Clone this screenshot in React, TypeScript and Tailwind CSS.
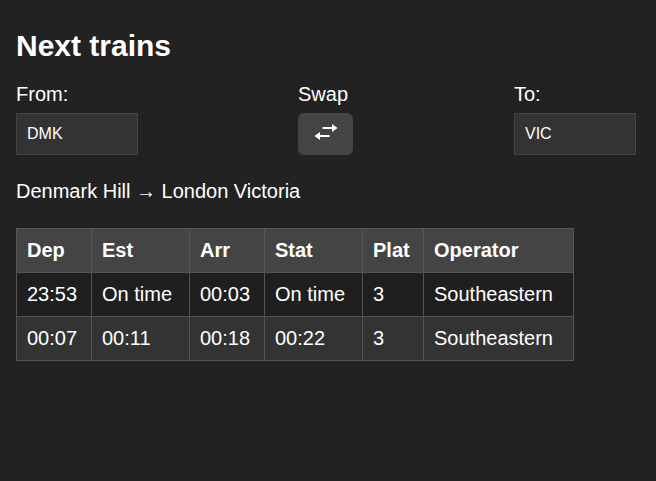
const rows = [
  { dep: "23:53", est: "On time", arr: "00:03", stat: "On time", plat: "3", op: "Southeastern" },
  { dep: "00:07", est: "00:11", arr: "00:18", stat: "00:22", plat: "3", op: "Southeastern" },
];

const cols = [
  { label: "Dep", w: "w-[75px]" },
  { label: "Est", w: "w-[98px]" },
  { label: "Arr", w: "w-[75px]" },
  { label: "Stat", w: "w-[98px]" },
  { label: "Plat", w: "w-[61px]" },
  { label: "Operator", w: "w-[150px]" },
];

function SwapIcon() {
  return (
    <svg width="24" height="16" viewBox="0 0 24 16" fill="#fff" className="mb-1">
      <rect x="8.5" y="3" width="10" height="2" />
      <polygon points="18,0 23.5,4 18,8" />
      <rect x="5.5" y="11" width="10" height="2" />
      <polygon points="6,8 0.5,12 6,16" />
    </svg>
  );
}

export default function App() {
  return (
    <div className="min-h-[481px] bg-[#222222] px-4 pt-[28px] text-white font-['Liberation_Sans',Arial,sans-serif]">
      <h1 className="text-3xl font-bold leading-9">Next trains</h1>

      {/* Station pickers */}
      <div className="mt-4 flex">
        <div className="mr-[160px] flex flex-col">
          <label className="text-xl leading-7">From:</label>
          <input
            defaultValue="DMK"
            className="mt-[5px] h-[42px] w-[122px] border border-[#444] bg-[#333] px-[10px] text-base text-white outline-none"
          />
        </div>
        <div className="mr-[161px] flex flex-col">
          <span className="text-xl leading-7">Swap</span>
          <button className="mt-[5px] flex h-[42px] w-[55px] items-center justify-center rounded-md bg-[#444]">
            <SwapIcon />
          </button>
        </div>
        <div className="flex flex-col">
          <label className="text-xl leading-7">To:</label>
          <input
            defaultValue="VIC"
            className="mt-[5px] h-[42px] w-[122px] border border-[#444] bg-[#333] px-[10px] text-base text-white outline-none"
          />
        </div>
      </div>

      <p className="mt-[22px] text-xl leading-7">Denmark Hill → London Victoria</p>

      {/* Departures */}
      <table className="mt-[23px] table-fixed border-collapse text-xl leading-[23px]">
        <thead>
          <tr className="bg-[#444]">
            {cols.map((c) => (
              <th key={c.label} className={`${c.w} border border-[#555] p-[10px] text-left font-bold`}>
                {c.label}
              </th>
            ))}
          </tr>
        </thead>
        <tbody>
          {rows.map((r, i) => (
            <tr key={i} className={i % 2 === 0 ? "bg-[#1f1f1f]" : "bg-[#333]"}>
              <td className="border border-[#555] p-[10px]">{r.dep}</td>
              <td className="border border-[#555] p-[10px]">{r.est}</td>
              <td className="border border-[#555] p-[10px]">{r.arr}</td>
              <td className="border border-[#555] p-[10px]">{r.stat}</td>
              <td className="border border-[#555] p-[10px]">{r.plat}</td>
              <td className="border border-[#555] p-[10px]">{r.op}</td>
            </tr>
          ))}
        </tbody>
      </table>
    </div>
  );
}
